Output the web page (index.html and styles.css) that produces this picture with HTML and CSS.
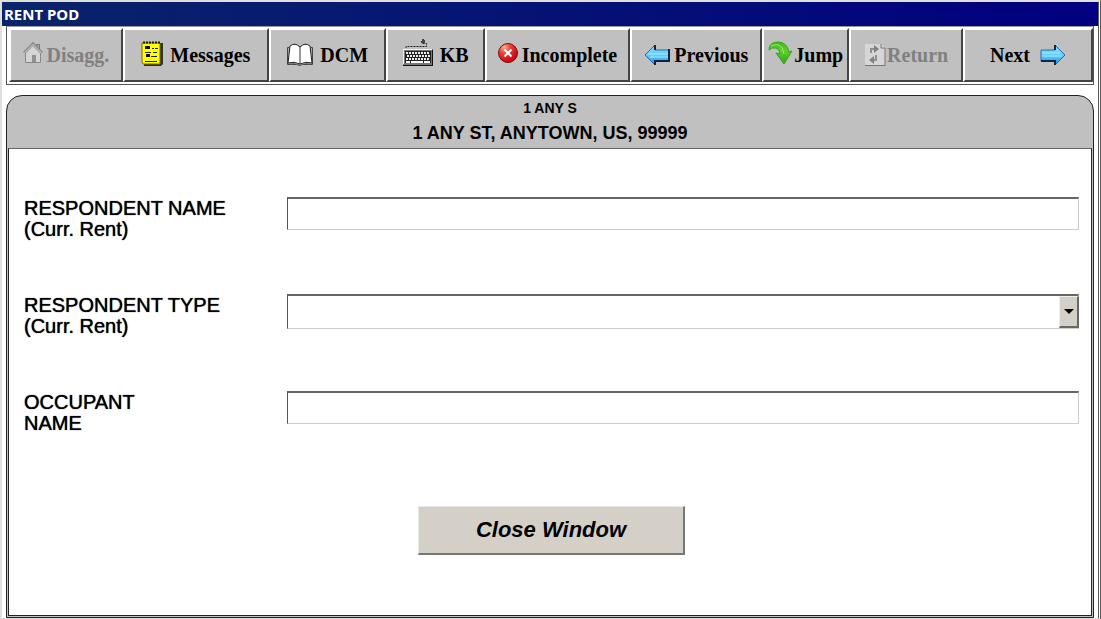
FILE: index.html
```html
<!DOCTYPE html>
<html lang="en">
<head>
    <meta charset="utf-8">
    <title>RENT POD</title>
    <link rel="stylesheet" href="styles.css">
</head>
<body>
    <div class="window">
        <h1 class="title-bar">RENT POD</h1>

        <div class="toolbar">
            <button type="button" disabled>
                <svg class="icon icon-raised" width="20" height="22" viewBox="0 0 20 22">
                    <path d="M13.500 2.500h3v7h-3z" fill="#aaa" stroke="#777"/>
                    <path d="M3 10l7-7 7 7v10H3z" fill="#d4d4d4"/>
                    <path d="M2.500 11v9.500h15V11" fill="none" stroke="#888"/>
                    <path d="M1 11l9-9 9 9" fill="none" stroke="#888" stroke-width="3"/>
                    <path d="M1 11.500l9-9 9 9" fill="none" stroke="#ddd"/>
                    <path d="M9 13h4v7H9z" fill="#909090"/>
                </svg>
                Disagg.
            </button>
            <button type="button">
                <svg class="icon icon-wide icon-raised" width="23" height="26" viewBox="0 0 23 26">
                    <path d="M3 3h19v21l-2 2H3z" fill="#333"/>
                    <path d="M1 3h18v21H2l-1-2z" fill="#ff0" stroke="#776f00"/>
                    <path d="M2 2.500h18" stroke="#222" stroke-width="2" stroke-dasharray="2 1"/>
                    <path d="M4 6h5v3H4zM5 14h4v3H5z" fill="#111"/>
                    <path d="M11 8.500h2M14 8.500h3M4 12.500h6M12 12.500h4M10 16.500h6M4 21.500h12" stroke="#222"/>
                </svg>
                Messages
            </button>
            <button type="button">
                <svg class="icon icon-wide" width="28" height="24" viewBox="0 0 28 24">
                    <path d="M3 4.500H1.500v17h9l3 1 3-1h10v-17H25" fill="#aaa" stroke="#444"/>
                    <path d="M14 4Q9-1 4 3L2 20q6-2 12 1 6-3 12-1L24 3q-5-4-10 1z" fill="#fff" stroke="#222"/>
                    <path d="M14 4v17" stroke="#333"/>
                    <path d="M4 21q6-2 10 1 4-3 10-1" fill="none" stroke="#777"/>
                </svg>
                DCM
            </button>
            <button type="button">
                <svg class="icon icon-wide icon-raised" width="32" height="30" viewBox="0 0 32 30">
                    <path d="M4 10V8.500h20.500V5.500H20" fill="none" stroke="#222" stroke-dasharray="2 1"/>
                    <path d="M20 1h2v1h1v3h-4V3h1z" fill="#444"/>
                    <path d="M1 11h30v17H1z" fill="#777"/>
                    <path d="M1 11h29v1H2v14H1z" fill="#eee"/>
                    <path d="M3 13h26v12H3z" fill="#222"/>
                    <path d="M4 15h24M4 21h24" stroke="#eee" stroke-width="2" stroke-dasharray="2 1"/>
                    <path d="M5 18h23" stroke="#eee" stroke-width="2" stroke-dasharray="2 1"/>
                    <path d="M4 24h4M9 24h12M22 24h6" stroke="#fff" stroke-width="2"/>
                    <path d="M1 27.500h30M30.500 12v16" stroke="#111"/>
                </svg>
                KB
            </button>
            <button type="button">
                <svg class="icon icon-raised" width="20" height="20" viewBox="0 0 20 20">
                    <defs>
                        <radialGradient id="red" cx=".3" cy=".2" r=".8">
                            <stop offset="0" stop-color="#ffb08a"/>
                            <stop offset=".4" stop-color="#e8433a"/>
                            <stop offset="1" stop-color="#cc0014"/>
                        </radialGradient>
                    </defs>
                    <circle cx="10" cy="10" r="9.500" fill="url(#red)" stroke="#7d1016"/>
                    <path d="M6.500 6.500l7 7M13.500 6.500l-7 7" stroke="#fff" stroke-width="2"/>
                </svg>
                Incomplete
            </button>
            <button type="button">
                <svg class="icon" width="26" height="22" viewBox="0 0 26 22">
                    <defs>
                        <linearGradient id="blue" x2="0" y2="1">
                            <stop offset="0" stop-color="#8be0ff"/>
                            <stop offset=".5" stop-color="#63cdfb"/>
                            <stop offset="1" stop-color="#178ff0"/>
                        </linearGradient>
                    </defs>
                    <path d="M1 11L11 1v5h14v11H11v4z" fill="url(#blue)" stroke="#2869b0"/>
                    <path d="M11 1v5M25 5v12H11v4" fill="none" stroke="#102447" stroke-width="2"/>
                    <path d="M4 10h20M6 13h18" stroke="#a9ecff"/>
                </svg>
                Previous
            </button>
            <button type="button" class="tight">
                <svg class="icon icon-raised" width="25" height="24" viewBox="0 0 25 24">
                    <defs>
                        <linearGradient id="green" x2="0" y2="1">
                            <stop offset="0" stop-color="#3dbb1c"/>
                            <stop offset=".4" stop-color="#5fd02f"/>
                            <stop offset="1" stop-color="#2ea70f"/>
                        </linearGradient>
                    </defs>
                    <path d="M1 9Q1 1 10 1q9 0 11 10l3-1-8 13-8-11 4 1Q12 8 8 7 4 6 1 9z" fill="url(#green)" stroke="#35a51b"/>
                    <path d="M3 5q11-5 13 8" fill="none" stroke="#9bea6c"/>
                </svg>
                Jump
            </button>
            <button type="button" class="tight" disabled>
                <svg class="icon" width="22" height="24" viewBox="0 0 22 24">
                    <path d="M1 1h16l4 4v18H1z" fill="#d6d6d6"/>
                    <path d="M17 1v4h4v17.500H1" fill="none" stroke="#777"/>
                    <path d="M7 10V6h4" fill="none" stroke="#909090" stroke-width="2"/>
                    <path d="M10 2l5 4-5 4z" fill="#808080"/>
                    <path d="M12 12v5H9" fill="none" stroke="#909090" stroke-width="2"/>
                    <path d="M10 13l-5 4 5 4z" fill="#808080"/>
                </svg>
                Return
            </button>
            <button type="button" class="next">
                Next
                <svg class="icon" width="26" height="22" viewBox="0 0 26 22">
                    <path d="M25 11L15 1v5H1v11h14v4z" fill="url(#blue)" stroke="#2869b0"/>
                    <path d="M15 1v5M1 17h14v4" fill="none" stroke="#102447" stroke-width="2"/>
                    <path d="M2 9h18M2 12h20" stroke="#a9ecff"/>
                </svg>
            </button>
        </div>

        <div class="panel">
            <div class="panel-header">
                <div class="street">1 ANY S</div>
                <div class="address">1 ANY ST, ANYTOWN, US, 99999</div>
            </div>

            <form class="panel-body">
                <div class="field">
                    <label for="respondentName">RESPONDENT NAME<br>(Curr. Rent)</label>
                    <input type="text" id="respondentName">
                </div>
                <div class="field">
                    <label for="respondentType">RESPONDENT TYPE<br>(Curr. Rent)</label>
                    <div class="select-box">
                        <select id="respondentType">
                            <option></option>
                        </select>
                        <span class="select-arrow"></span>
                    </div>
                </div>
                <div class="field">
                    <label for="occupantName">OCCUPANT<br>NAME</label>
                    <input type="text" id="occupantName">
                </div>
                <button type="button" class="close">Close Window</button>
            </form>
        </div>
    </div>
</body>
</html>
```
FILE: styles.css
```css
* {
    box-sizing: border-box;
}
body {
    margin: 0;
    background-color: #fff;
    color: #000;
    font-family: "Liberation Sans", Arial, sans-serif;
}
.window {
    display: flex;
    flex-direction: column;
    min-height: 100vh;
    border: 2px solid #e0dfda;
    border-right: 3px double #555;
    border-bottom: 1px solid #ddd;
}
.title-bar {
    margin: 0;
    padding: 0 2px;
    height: 24px;
    background: linear-gradient(to right, #0a246a, #000080);
    color: #fff;
    font: bold 15px/24px "Noto Sans", Tahoma, sans-serif;
}

/* toolbar */
.toolbar {
    display: grid;
    grid-template-columns: 114fr 146fr 117fr 99fr 146fr 132fr 87fr 114fr 130fr;
    margin: 0 4px;
    padding: 1px 0 2px 2px;
    border: 1px solid #555;
    border-top-color: #999;
}
.toolbar button {
    display: flex;
    align-items: center;
    justify-content: center;
    gap: 4px;
    height: 54px;
    min-width: 0;
    padding: 0;
    background: #c0c0c0;
    border: 2px solid #444;
    border-top-color: #fff;
    border-left-color: #fff;
    color: #000;
    font: bold 20px/24px "Liberation Serif", "Times New Roman", serif;
}
.toolbar button:disabled {
    color: #808080;
}
.toolbar .tight {
    gap: 1px;
}
.toolbar .next {
    gap: 10px;
}
.icon {
    flex: none;
}
.icon-wide {
    margin-right: 2px;
}
.icon-raised {
    margin-bottom: 4px;
}

/* panel */
.panel {
    flex: 1;
    display: flex;
    flex-direction: column;
    margin: 10px 4px 0;
    padding: 0 1px 1px;
    background: #c0c0c0;
    border: 1px solid #222;
    border-radius: 16px 16px 0 0;
}
.panel-header {
    padding-top: 2px;
    text-align: center;
    font-weight: bold;
}
.street {
    font-size: 14px;
    line-height: 20px;
}
.address {
    font-size: 18px;
    line-height: 30px;
}
.panel-body {
    flex: 1;
    display: flex;
    flex-direction: column;
    gap: 54px;
    padding: 48px 12px 40px 15px;
    background: #fff;
    border: 1px solid #222;
    border-top-color: #666;
}
.field {
    display: grid;
    grid-template-columns: 263px 1fr;
    align-items: start;
}
.field label {
    padding-top: 1px;
    font-size: 20px;
    line-height: 21px;
    text-shadow: 0 0 1px #000;
}
.field input,
.field select {
    display: block;
    width: 100%;
    height: 33px;
    padding: 4px 6px;
    background: #fff;
    border: 1px solid #ccc;
    border-top: 2px solid #666;
    border-left-color: #555;
    border-radius: 0;
    font: 20px/21px "Liberation Sans", Arial, sans-serif;
}
.select-box {
    position: relative;
}
.field select {
    height: 35px;
    appearance: none;
}
.select-arrow {
    position: absolute;
    top: 2px;
    right: 0;
    bottom: 1px;
    width: 20px;
    display: flex;
    align-items: center;
    justify-content: center;
    background: #d4d0c8;
    border: 1px solid #eee;
    border-right: 2px solid #666;
    border-bottom: 2px solid #666;
    pointer-events: none;
}
.select-arrow::before {
    content: "";
    border: 5px solid transparent;
    border-top-color: #000;
    border-bottom: 0;
}
.close {
    align-self: center;
    width: 267px;
    height: 49px;
    margin-top: 18px;
    background: #d4d0c8;
    border: 1px solid #e8e6e0;
    border-right: 2px solid #777;
    border-bottom: 2px solid #777;
    color: #000;
    font: italic bold 22px/26px "Liberation Sans", Arial, sans-serif;
}
```
